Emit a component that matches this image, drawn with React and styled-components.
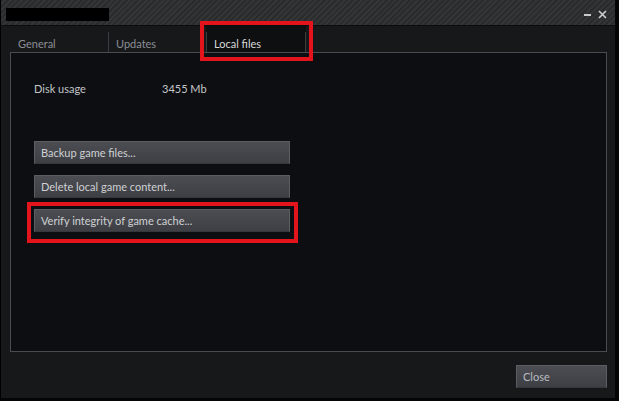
import styled, { createGlobalStyle } from 'styled-components';

const Global = createGlobalStyle`
  html, body { margin: 0; padding: 0; background: #000; }
  body { font-family: "Lato", "Noto Sans", sans-serif; }
`;

const Window = styled.div`
  position: relative;
  width: 614px;
  height: 398px;
  background: #17181a;
  border-left: 1px solid #000;
  border-right: 4px solid #050505;
  border-bottom: 3px solid #050505;
  display: flex;
  flex-direction: column;
  overflow: hidden;
`;

const TitleBar = styled.div`
  height: 26px;
  flex-shrink: 0;
  box-sizing: border-box;
  border-bottom: 1px solid #0c0c0d;
  background: repeating-linear-gradient(135deg, #2a2b2d 0 2px, #343537 2px 4px);
  display: flex;
  align-items: center;
  padding: 0 8px 0 5px;
`;

const Redacted = styled.div`
  width: 103px;
  height: 13px;
  margin-top: 4px;
  background: #000;
`;

const WinControls = styled.div`
  margin-left: auto;
  display: flex;
  align-items: center;
  gap: 6px;
  margin-top: 3px;
`;

const TabRow = styled.div`
  display: flex;
  height: 26px;
  padding-left: 10px;
  flex-shrink: 0;
`;

const Tab = styled.div`
  box-sizing: border-box;
  width: ${p => p.$w}px;
  padding: 11px 0 0 7px;
  font-size: 11px;
  color: ${p => (p.$active ? '#d8d8d8' : '#8b8f95')};
  background: ${p => (p.$active ? '#0e0f11' : 'transparent')};
  border-right: 1px solid #3b3c3f;
  border-image: linear-gradient(to bottom, transparent 7px, #3b3c3f 7px) 1;
  ${p => p.$active && 'border-left: 1px solid #3b3c3f; margin-left: -1px;'}
`;

const Panel = styled.div`
  margin: 0 8px 0 9px;
  height: 300px;
  box-sizing: border-box;
  background: #0d0e11;
  border: 1px solid #4a4b4e;
  border-top-color: #4a4b4e;
  padding: 27px 0 0 23px;
  display: flex;
  flex-direction: column;
`;

const InfoRow = styled.div`
  display: flex;
  font-size: 11px;
  color: #c4c6c9;
  height: 16px;
  align-items: center;
`;

const InfoLabel = styled.span`
  width: 128px;
`;

const ButtonStack = styled.div`
  display: flex;
  flex-direction: column;
  gap: 11px;
  margin-top: 45px;
`;

const Button = styled.div`
  box-sizing: border-box;
  width: ${p => p.$w}px;
  height: 23px;
  padding-left: 6px;
  display: flex;
  align-items: center;
  font-size: 11px;
  color: ${p => p.$color || '#cfd1d4'};
  background: linear-gradient(to bottom, #4c4d52, #3e3f44);
  border: 1px solid #5c5d62;
  border-bottom-color: #36373b;
`;

const Footer = styled.div`
  flex: 1;
  display: flex;
  justify-content: flex-end;
  padding: 13px 8px 0 0;
`;

const Highlight = styled.div`
  position: absolute;
  left: ${p => p.$x}px;
  top: ${p => p.$y}px;
  width: ${p => p.$w}px;
  height: ${p => p.$h}px;
  box-sizing: border-box;
  border: 4px solid #e3141c;
  pointer-events: none;
`;

function Minimize() {
  return (
    <svg width="8" height="8" viewBox="0 0 8 8">
      <rect x="0" y="4" width="7" height="2" fill="#c9c9c9" />
    </svg>
  );
}

function CloseIcon() {
  return (
    <svg width="9" height="9" viewBox="0 0 9 9">
      <path d="M1 1 L8 8 M8 1 L1 8" stroke="#d0d0d0" strokeWidth="1.6" />
    </svg>
  );
}

export default function App() {
  return (
    <>
      <Global />
      <Window>
        <TitleBar>
          <Redacted />
          <WinControls>
            <Minimize />
            <CloseIcon />
          </WinControls>
        </TitleBar>
        <TabRow>
          <Tab $w={98}>General</Tab>
          <Tab $w={98}>Updates</Tab>
          <Tab $w={100} $active>Local files</Tab>
        </TabRow>
        <Panel>
          <InfoRow>
            <InfoLabel>Disk usage</InfoLabel>
            <span>3455 Mb</span>
          </InfoRow>
          <ButtonStack>
            <Button $w={256}>Backup game files...</Button>
            <Button $w={256}>Delete local game content...</Button>
            <Button $w={256}>Verify integrity of game cache...</Button>
          </ButtonStack>
        </Panel>
        <Footer>
          <Button $w={91} $color="#b9bcc1">Close</Button>
        </Footer>
        <Highlight $x={199} $y={21} $w={113} $h={40} />
        <Highlight $x={26} $y={202} $w={271} $h={41} />
      </Window>
    </>
  );
}
